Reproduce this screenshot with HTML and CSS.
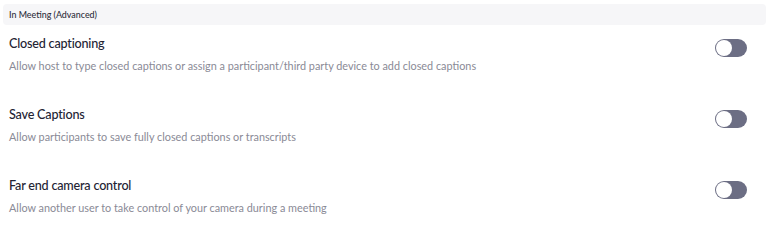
FILE: index.html
```html
<!DOCTYPE html>
<html>
<head>
<meta charset="utf-8">
<link rel="stylesheet" href="styles.css">
</head>
<body>
<div class="panel">
  <div class="section-head">In Meeting (Advanced)</div>
  <div class="setting">
    <div class="text">
      <div class="title">Closed captioning</div>
      <div class="desc">Allow host to type closed captions or assign a participant/third party device to add closed captions</div>
    </div>
    <div class="toggle"><span class="knob"></span></div>
  </div>
  <div class="setting">
    <div class="text">
      <div class="title">Save Captions</div>
      <div class="desc">Allow participants to save fully closed captions or transcripts</div>
    </div>
    <div class="toggle"><span class="knob"></span></div>
  </div>
  <div class="setting">
    <div class="text">
      <div class="title">Far end camera control</div>
      <div class="desc">Allow another user to take control of your camera during a meeting</div>
    </div>
    <div class="toggle"><span class="knob"></span></div>
  </div>
</div>
</body>
</html>
```
FILE: styles.css
```css
html, body {
  margin: 0;
  padding: 0;
  background: #ffffff;
}
body {
  font-family: Lato, "Open Sans", sans-serif;
  width: 770px;
  height: 229px;
  overflow: hidden;
}
.panel {
  padding-top: 4px;
}
.section-head {
  margin: 0 4px 0 3px;
  height: 21px;
  line-height: 21px;
  padding-left: 6px;
  background: #f6f6f8;
  border-radius: 4px;
  font-size: 8.9px;
  font-weight: 500;
  color: #2d2d3a;
}
.setting {
  display: flex;
  justify-content: space-between;
  align-items: flex-start;
  height: 60px;
  padding: 11px 23px 0 9px;
}
.title {
  font-size: 12.6px;
  letter-spacing: -0.2px;
  line-height: 16px;
  font-weight: 500;
  color: #232333;
}
.desc {
  margin-top: 7px;
  font-size: 10.85px;
  line-height: 14px;
  color: #8a8a96;
}
.toggle {
  margin-top: 3px;
  width: 32px;
  height: 18px;
  border-radius: 9px;
  background: #6c6e84;
  position: relative;
  flex: none;
}
.knob {
  position: absolute;
  left: 1px;
  top: 1px;
  width: 16px;
  height: 16px;
  border-radius: 50%;
  background: #ffffff;
}
```
